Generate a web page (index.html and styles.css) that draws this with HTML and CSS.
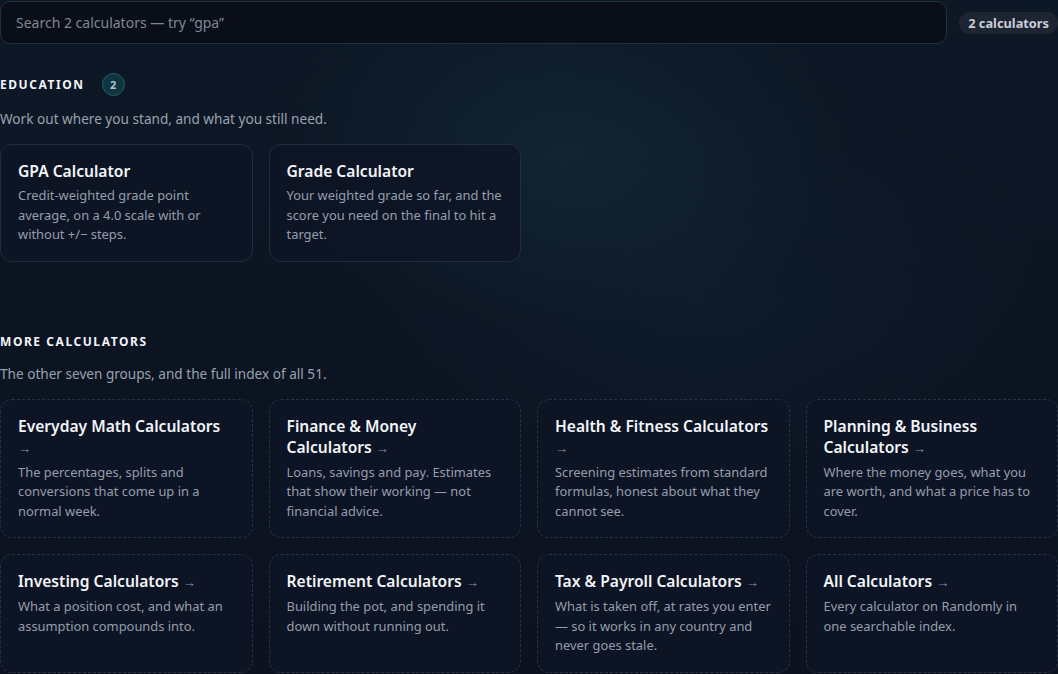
FILE: index.html
```html
<!DOCTYPE html>
<html lang="en">
<head>
    <meta charset="UTF-8">
    <meta name="viewport" content="width=device-width, initial-scale=1.0">
    <title>Calculators</title>
    <link rel="stylesheet" href="styles.css">
</head>
<body>
    <div class="page">
        <div class="toolbar">
            <input class="search" type="text" placeholder="Search 2 calculators — try “gpa”">
            <span class="count">2 calculators</span>
        </div>

        <section class="group">
            <div class="group-head">
                <h2 class="group-title">Education</h2>
                <span class="group-badge">2</span>
            </div>
            <p class="group-desc">Work out where you stand, and what you still need.</p>
            <div class="grid">
                <a class="card" href="#">
                    <div class="card-title">GPA Calculator</div>
                    <div class="card-desc">Credit-weighted grade point average, on a 4.0 scale with or without +/− steps.</div>
                </a>
                <a class="card" href="#">
                    <div class="card-title">Grade Calculator</div>
                    <div class="card-desc">Your weighted grade so far, and the score you need on the final to hit a target.</div>
                </a>
            </div>
        </section>

        <section class="group more">
            <div class="group-head">
                <h2 class="group-title">More calculators</h2>
            </div>
            <p class="group-desc">The other seven groups, and the full index of all 51.</p>
            <div class="grid">
                <a class="card link" href="#">
                    <div class="card-title">Everyday Math Calculators <span class="arrow">→</span></div>
                    <div class="card-desc">The percentages, splits and conversions that come up in a normal week.</div>
                </a>
                <a class="card link" href="#">
                    <div class="card-title">Finance &amp; Money Calculators <span class="arrow">→</span></div>
                    <div class="card-desc">Loans, savings and pay. Estimates that show their working — not financial advice.</div>
                </a>
                <a class="card link" href="#">
                    <div class="card-title">Health &amp; Fitness Calculators <span class="arrow">→</span></div>
                    <div class="card-desc">Screening estimates from standard formulas, honest about what they cannot see.</div>
                </a>
                <a class="card link" href="#">
                    <div class="card-title">Planning &amp; Business Calculators <span class="arrow">→</span></div>
                    <div class="card-desc">Where the money goes, what you are worth, and what a price has to cover.</div>
                </a>
                <a class="card link" href="#">
                    <div class="card-title">Investing Calculators <span class="arrow">→</span></div>
                    <div class="card-desc">What a position cost, and what an assumption compounds into.</div>
                </a>
                <a class="card link" href="#">
                    <div class="card-title">Retirement Calculators <span class="arrow">→</span></div>
                    <div class="card-desc">Building the pot, and spending it down without running out.</div>
                </a>
                <a class="card link" href="#">
                    <div class="card-title">Tax &amp; Payroll Calculators <span class="arrow">→</span></div>
                    <div class="card-desc">What is taken off, at rates you enter — so it works in any country and never goes stale.</div>
                </a>
                <a class="card link" href="#">
                    <div class="card-title">All Calculators <span class="arrow">→</span></div>
                    <div class="card-desc">Every calculator on Randomly in one searchable index.</div>
                </a>
            </div>
        </section>
    </div>
</body>
</html>
```

FILE: styles.css
```css
html {
    background: #0c1421;
}
body {
    margin: 0;
    min-height: 674px;
    font-family: "Noto Sans", "Open Sans", sans-serif;
    color: #e8ecf2;
    background:
        radial-gradient(ellipse 420px 260px at 560px 150px, rgba(24, 60, 72, 0.35), transparent 70%),
        radial-gradient(ellipse 500px 300px at 700px 300px, rgba(20, 44, 60, 0.3), transparent 70%),
        linear-gradient(180deg, #0d1826 0%, #0c1422 50%, #0c1220 100%);
}
.page {
    padding-top: 1px;
}
.toolbar {
    display: flex;
    align-items: center;
    gap: 12px;
}
.search {
    flex: 1;
    height: 43px;
    box-sizing: border-box;
    padding: 0 15px;
    background: #0a0e18;
    border: 1px solid #262d3b;
    border-radius: 10px;
    color: #e8ecf2;
    font-family: inherit;
    font-size: 14px;
    outline: none;
}
.search::placeholder {
    color: #7f8796;
}
.count {
    height: 22px;
    line-height: 22px;
    padding: 0 9px;
    border-radius: 11px;
    background: #1d2432;
    color: #c9ced8;
    font-size: 12.8px;
    font-weight: 700;
    white-space: nowrap;
}
.group {
    margin-top: 29px;
}
.group.more {
    margin-top: 71px;
}
.group-head {
    display: flex;
    align-items: center;
    gap: 17px;
    margin-bottom: 12px;
}
.group-title {
    margin: 0;
    font-size: 12px;
    line-height: 18px;
    font-weight: 700;
    letter-spacing: 0.13em;
    text-transform: uppercase;
    color: #f1f4f8;
}
.group-badge {
    width: 21px;
    height: 21px;
    line-height: 21px;
    text-align: center;
    border-radius: 50%;
    background: #113540;
    border: 1px solid #1e5e69;
    color: #a9c7cd;
    font-size: 11px;
    font-weight: 700;
}
.group-desc {
    margin: 0 0 15px;
    font-size: 13.6px;
    line-height: 21px;
    color: #9aa2b0;
}
.grid {
    display: grid;
    grid-template-columns: repeat(4, 1fr);
    gap: 16px;
}
.card {
    display: block;
    padding: 16px 17px 16px;
    border: 1px solid #222c3c;
    border-radius: 12px;
    background: rgba(14, 21, 38, 0.85);
    text-decoration: none;
    color: inherit;
}
.card.link {
    border-style: dashed;
    border-color: #263142;
}
.card-title {
    font-size: 15.6px;
    line-height: 21px;
    font-weight: 600;
    color: #f3f5f9;
    margin-bottom: 4px;
}
.arrow {
    font-size: 13px;
    font-weight: 400;
    color: #8a92a0;
}
.card-desc {
    font-size: 12.9px;
    line-height: 19.5px;
    color: #959dab;
}
```
